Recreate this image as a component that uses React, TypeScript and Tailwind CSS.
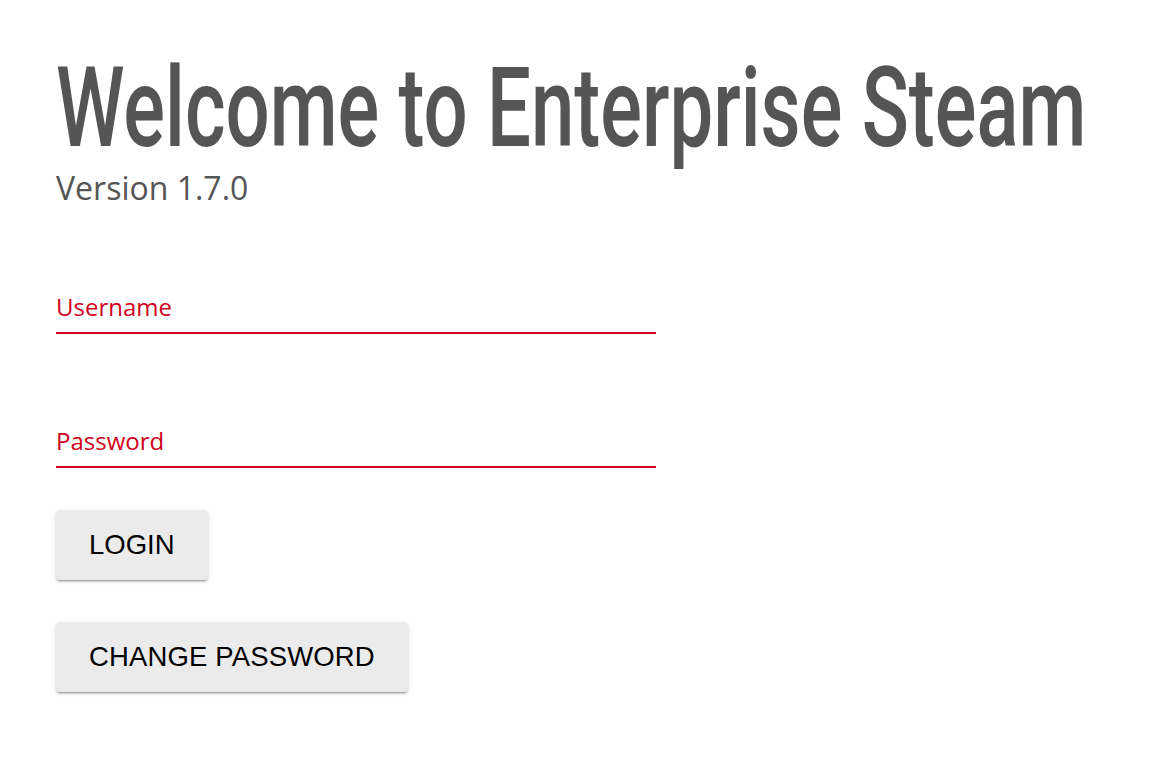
import React from 'react';

const fieldLabel = "block pb-[9px] text-[24px] leading-[32px] text-[#d0021b] border-b-2 border-[#d0021b] font-['Open_Sans',sans-serif]";
const btn =
  "h-[70px] rounded-[4px] bg-[#ebebeb] px-[33px] text-[27.5px] text-black font-['Liberation_Sans',Arial,sans-serif] shadow-[0_3px_1px_-2px_rgba(0,0,0,0.2),0_2px_2px_0_rgba(0,0,0,0.14),0_1px_5px_0_rgba(0,0,0,0.12)]";

export default function App() {
  return (
    <div className="min-h-screen bg-white px-[56px] pt-[52px]">
      <h1 className="w-[1025px] origin-left scale-x-[0.695] whitespace-nowrap text-[112px] leading-[112px] font-medium text-[#555555] font-['Roboto',sans-serif]">
        Welcome to Enterprise Steam
      </h1>
      <p className="mt-[2px] text-[32px] leading-[44px] text-[#555555] font-['Open_Sans',sans-serif]">Version 1.7.0</p>

      <form className="mt-[81px] w-[600px]" onSubmit={(e) => e.preventDefault()}>
        <label className={fieldLabel}>Username</label>
        <label className={`mt-[91px] ${fieldLabel}`}>Password</label>
        <div className="mt-[42px] flex flex-col items-start gap-[42px]">
          <button type="submit" className={btn}>LOGIN</button>
          <button type="button" className={`${btn} tracking-[0.005em]`}>CHANGE PASSWORD</button>
        </div>
      </form>
    </div>
  );
}
